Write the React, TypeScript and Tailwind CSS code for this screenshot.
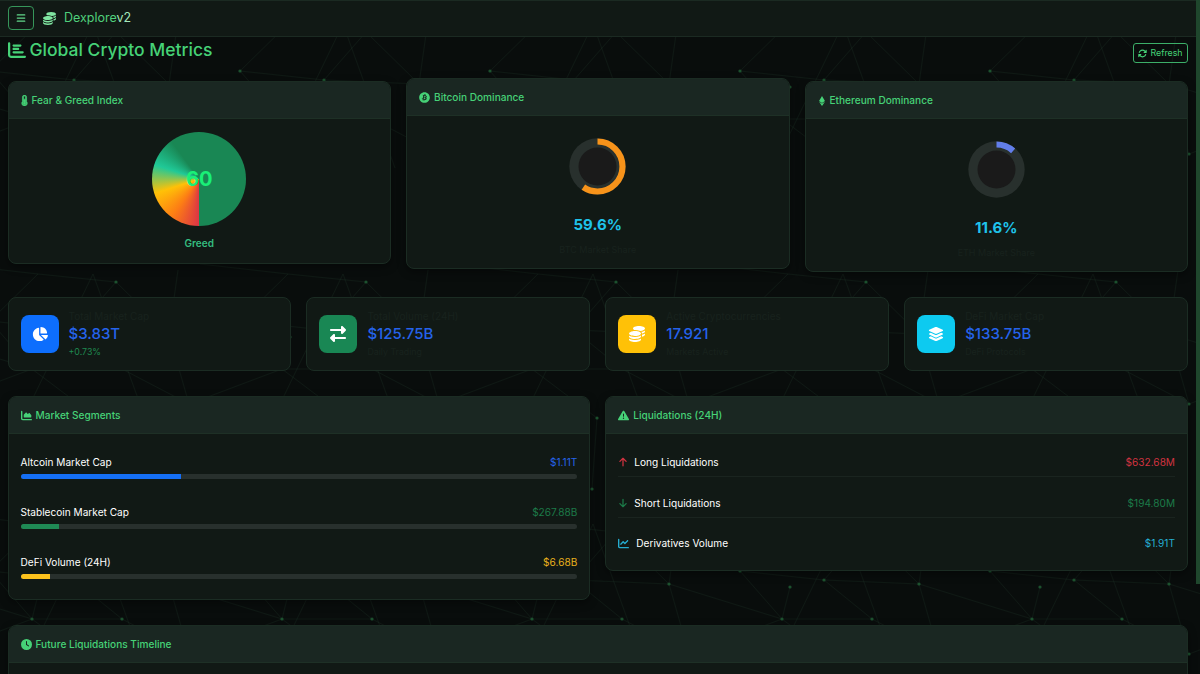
import React from 'react';
import {
  FaBars,
  FaCoins,
  FaChartBar,
  FaArrowsRotate,
  FaBitcoin,
  FaEthereum,
  FaChartPie,
  FaRightLeft,
  FaLayerGroup,
  FaChartArea,
  FaTriangleExclamation,
  FaArrowUp,
  FaArrowDown,
  FaChartLine,
  FaClock,
} from 'react-icons/fa6';
import { FaThermometerHalf } from 'react-icons/fa';

const stats = [
  { label: 'Total Market Cap', value: '$3.83T', note: '+0.73%', noteColor: 'text-[#1f8a50]', bg: 'bg-[#0d6efd]', icon: <FaChartPie size={16} /> },
  { label: 'Total Volume (24H)', value: '$125.75B', note: 'Daily Trading', noteColor: 'text-[#18221d]', bg: 'bg-[#198754]', icon: <FaRightLeft size={16} /> },
  { label: 'Active Cryptocurrencies', value: '17.921', note: 'Markets Active', noteColor: 'text-[#18221d]', bg: 'bg-[#ffc107]', icon: <FaCoins size={16} /> },
  { label: 'DeFi Market Cap', value: '$133.75B', note: 'DeFi Protocols', noteColor: 'text-[#18221d]', bg: 'bg-[#0dcaf0]', icon: <FaLayerGroup size={16} /> },
];

const segments = [
  { label: 'Altcoin Market Cap', value: '$1.11T', percent: 28.9, color: 'text-[#2563eb]', bar: 'bg-[#156ff5]' },
  { label: 'Stablecoin Market Cap', value: '$267.88B', percent: 7, color: 'text-[#1c7a48]', bar: 'bg-[#1f8a55]' },
  { label: 'DeFi Volume (24H)', value: '$6.68B', percent: 5.3, color: 'text-[#e8b11c]', bar: 'bg-[#fdc21c]' },
];

const liquidations = [
  { label: 'Long Liquidations', value: '$632.68M', color: 'text-[#d13340]', icon: <FaArrowUp size={10} />, gap: 'gap-1.5' },
  { label: 'Short Liquidations', value: '$194.80M', color: 'text-[#1c7a48]', icon: <FaArrowDown size={10} />, gap: 'gap-1.5' },
  { label: 'Derivatives Volume', value: '$1.91T', color: 'text-[#25add0]', icon: <FaChartLine size={11} />, gap: 'gap-[7px]' },
];

const nodes = [
  [240, 71], [74, 80], [116, 32], [189, 154], [97, 168], [92, 239],
  [32, 119], [122, 119], [169, 84], [40, 87],
];

// lines run over the tile's edges, so they are drawn once per neighbouring tile
const offsets = [
  [0, 0], [-250, 0], [250, 0], [0, -250], [0, 250],
];

const Network: React.FC = () => (
  <svg className="absolute inset-0 h-full w-full" aria-hidden="true">
    <defs>
      <pattern id="net" width="250" height="250" patternUnits="userSpaceOnUse">
        {offsets.map(([x, y]) => (
          <path
            key={`${x}-${y}`}
            transform={`translate(${x} ${y})`}
            d="M240 71L324 80L419 84M240 71L282 119L372 119M169 84L282 119L290 87M240 71L288 24L366 32M200 14L288 24M74 80L122 119M116 32L74 80M116 32L169 84L189 154M93 24L145 168M93 24L32 150M178 20L169 84M97 168L32 119L-61 154M122 119L189 154M92 239L97 168"
            stroke="#1d3a29"
            strokeOpacity="0.26"
            fill="none"
          />
        ))}
        {nodes.map(([x, y]) => (
          <circle key={`${x}-${y}`} cx={x} cy={y} r="1.6" fill="#1e5932" fillOpacity="0.9" />
        ))}
      </pattern>
    </defs>
    <rect width="100%" height="100%" fill="url(#net)" />
  </svg>
);

interface CardProps {
  title: string;
  icon: React.ReactNode;
  className?: string;
  children?: React.ReactNode;
}

const Card: React.FC<CardProps> = ({ title, icon, className = '', children }) => (
  <section className={`overflow-hidden rounded-lg border border-[#1b2c23] bg-[#111915] shadow-[0_3px_8px_rgba(0,0,0,0.4)] ${className}`}>
    <h2 className="flex h-[37px] items-center gap-1 border-b border-[#1e3026] bg-[#1a2722] px-3 pt-px text-[10.1px] font-medium text-[#46d277]">
      {icon}
      {title}
    </h2>
    {children}
  </section>
);

interface DominanceProps {
  percent: number;
  color: string;
  label: string;
}

const Dominance: React.FC<DominanceProps> = ({ percent, color, label }) => (
  <div className="flex flex-col items-center pt-[22px]">
    <svg width="57" height="57" viewBox="0 0 57 57">
      <circle cx="28.5" cy="28.5" r="28.2" fill="#28302d" />
      <circle cx="28.5" cy="28.5" r="19" fill="#1a1a1a" />
      <circle
        cx="28.5"
        cy="28.5"
        r="25"
        fill="none"
        stroke={color}
        strokeWidth="6.2"
        pathLength="100"
        strokeDasharray={`${percent} 100`}
        transform="rotate(-90 28.5 28.5)"
      />
    </svg>
    <p className="mt-[18px] text-[15px] font-bold leading-6 text-[#1fc3ea]">{percent}%</p>
    <p className="mt-[5px] text-[9px] leading-4 text-[#18221d]">{label}</p>
  </div>
);

const App: React.FC = () => {
  return (
    <div className="relative h-[674px] w-full overflow-hidden bg-[#090d0c] font-['Inter',sans-serif] text-white">
      <Network />
      <div className="absolute top-0 right-0 z-10 h-[584px] w-1 bg-[#1f472d]" />

      <div className="relative mr-1">
        <nav className="flex h-[37px] items-center border-y border-[#1b2a22] bg-[#111915] px-2 pb-px">
          <button aria-label="Menu" className="flex h-6 w-[26px] items-center justify-center rounded border border-[#36965a] text-[#62d78a]">
            <FaBars size={10} />
          </button>
          <FaCoins size={13} className="ml-[9px] text-[#80e5a1]" />
          <span className="ml-2 pt-px text-[12.5px] text-[#4fcf7b]">
            Dexplore<span className="text-[#a4e8bb]">v2</span>
          </span>
        </nav>

        <main className="pr-2 pl-[7.5px]">
          <header className="flex h-11 items-start justify-between">
            <h1 className="flex items-center gap-1 pt-px text-[17.5px] font-medium leading-6 text-[#46d277]">
              <FaChartBar size={18} />
              Global Crypto Metrics
            </h1>
            <button className="mt-1.5 flex h-5 w-[55px] items-center justify-center gap-[3px] rounded-[3px] border border-[#3cae68] text-[8.8px] text-[#46d277]">
              <FaArrowsRotate size={9} />
              Refresh
            </button>
          </header>

          <div className="grid h-[216px] grid-cols-3 items-start gap-[15px]">
            <Card title="Fear & Greed Index" icon={<FaThermometerHalf size={11} strokeWidth={30} stroke="currentColor" className="-mx-0.5" />} className="h-[183px]">
              <div className="flex flex-col items-center pt-[13px]">
                <div className="flex h-[94px] w-[94px] items-center justify-center rounded-full bg-[conic-gradient(from_180deg,#dc3545_0deg,#fd7e14_36deg,#ffc107_72deg,#20c997_108deg,#198754_144deg,#198754_360deg)]">
                  <span className="text-[20px] font-bold text-[#19f077]">60</span>
                </div>
                <p className="mt-[9px] text-[10px] font-semibold leading-4 text-[#35bd80]">Greed</p>
              </div>
            </Card>
            <Card title="Bitcoin Dominance" icon={<FaBitcoin size={11} />} className="-mt-[3px] h-[191px]">
              <Dominance percent={59.6} color="#f7931a" label="BTC Market Share" />
            </Card>
            <Card title="Ethereum Dominance" icon={<FaEthereum size={10} className="-mx-px" />} className="h-[191px]">
              <Dominance percent={11.6} color="#627eea" label="ETH Market Share" />
            </Card>
          </div>

          <div className="grid h-[99px] grid-cols-4 items-start gap-[15px]">
            {stats.map((stat) => (
              <div key={stat.label} className="flex h-[74px] items-center rounded-lg border border-[#1b2c23] bg-[#111915] px-3">
                <div className={`flex h-[38px] w-[38px] shrink-0 items-center justify-center rounded-lg text-white ${stat.bg}`}>{stat.icon}</div>
                <div className="ml-2.5">
                  <p className="text-[10px] leading-3 text-[#18221d]">{stat.label}</p>
                  <p className="pt-px text-[15px] font-medium leading-[22px] text-[#2563eb]">{stat.value}</p>
                  <p className={`text-[8.8px] leading-[14px] ${stat.noteColor}`}>{stat.note}</p>
                </div>
              </div>
            ))}
          </div>

          <div className="grid h-[229px] grid-cols-2 items-start gap-[15px]">
            <Card title="Market Segments" icon={<FaChartArea size={11} />} className="h-[204px]">
              <div className="px-3 pt-5">
                {segments.map((item) => (
                  <div key={item.label} className="h-[50px]">
                    <div className="flex items-center justify-between text-[10.1px] leading-4">
                      <span>{item.label}</span>
                      <span className={item.color}>{item.value}</span>
                    </div>
                    <div className="mt-1 h-[5px] overflow-hidden rounded-full bg-[#28302d]">
                      <div className={`h-full ${item.bar}`} style={{ width: `${item.percent}%` }} />
                    </div>
                  </div>
                ))}
              </div>
            </Card>
            <Card title="Liquidations (24H)" icon={<FaTriangleExclamation size={11} />} className="h-[175px]">
              <div className="px-3 pt-0.5">
                {liquidations.map((item) => (
                  <div key={item.label} className="flex h-[41px] items-end justify-between border-b border-[#1a241f] pb-1.5 text-[10.1px] leading-4 last:border-b-0 last:pb-2">
                    <span className={`flex items-center ${item.gap}`}>
                      <span className={`flex ${item.color}`}>{item.icon}</span>
                      {item.label}
                    </span>
                    <span className={item.color}>{item.value}</span>
                  </div>
                ))}
              </div>
            </Card>
          </div>

          <Card title="Future Liquidations Timeline" icon={<FaClock size={11} />} className="h-[120px]" />
        </main>
      </div>
    </div>
  );
};

export default App;
